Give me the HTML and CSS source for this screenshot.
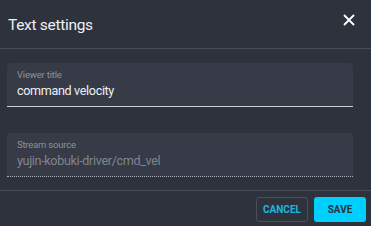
FILE: index.html
```html
<!DOCTYPE html>
<html lang="en">
<head>
    <meta charset="UTF-8">
    <title>Text settings</title>
    <link rel="stylesheet" href="styles.css">
</head>
<body>
    <div class="dialog">
        <div class="dialog-header">
            <div class="dialog-title">Text settings</div>
            <button class="close-btn" aria-label="Close">
                <svg width="12" height="12" viewBox="0 0 12 12">
                    <path d="M1 1L11 11M11 1L1 11" stroke="#ffffff" stroke-width="1.8" fill="none"/>
                </svg>
            </button>
        </div>
        <div class="dialog-body">
            <div class="field">
                <div class="field-label">Viewer title</div>
                <div class="field-value">command velocity</div>
            </div>
            <div class="field disabled">
                <div class="field-label">Stream source</div>
                <div class="field-value">yujin-kobuki-driver/cmd_vel</div>
            </div>
        </div>
        <div class="dialog-footer">
            <button class="btn btn-outline">CANCEL</button>
            <button class="btn btn-primary">SAVE</button>
        </div>
    </div>
</body>
</html>
```

FILE: styles.css
```css
:root {
    --bg: #2d323d;
    --field-bg: #363b47;
    --divider: #474c57;
    --accent: #00d0ff;
}

body {
    margin: 0;
    background-color: var(--bg);
    font-family: Roboto, 'Noto Sans', sans-serif;
    color: #ffffff;
}

.dialog {
    width: 371px;
    height: 226px;
    display: flex;
    flex-direction: column;
}

.dialog-header {
    height: 48px;
    display: flex;
    align-items: center;
    justify-content: space-between;
    padding: 0 16px 0 8px;
    border-bottom: 1px solid var(--divider);
}

.dialog-title {
    font-size: 15.5px;
    letter-spacing: -0.3px;
    color: #eef0f3;
    margin-top: 2px;
}

.close-btn {
    background: none;
    border: none;
    padding: 0;
    cursor: pointer;
    display: flex;
    margin-top: -9px;
}

.dialog-body {
    padding: 14px 18px 0 7px;
    height: 127px;
}

.field {
    background-color: var(--field-bg);
    border-radius: 4px 4px 0 0;
    border-bottom: 1px solid #c9ccd2;
    padding: 6px 10px 5px;
    height: 32px;
}

.field.disabled {
    margin-top: 26px;
    border-bottom: 1px dotted #a9adb5;
}

.field-label {
    font-size: 9.5px;
    letter-spacing: -0.2px;
    color: #8c919b;
    line-height: 12px;
}

.field-value {
    font-size: 12.6px;
    letter-spacing: -0.35px;
    line-height: 20px;
    color: #eef0f3;
}

.field.disabled .field-value {
    color: #80858f;
}

.dialog-footer {
    border-top: 1px solid var(--divider);
    display: flex;
    justify-content: flex-end;
    gap: 6px;
    padding: 6px 5px 0 0;
}

.btn {
    font-family: Roboto, sans-serif;
    font-size: 10px;
    font-weight: bold;
    height: 25px;
    border-radius: 3px;
    cursor: pointer;
    padding: 0;
}

.btn-outline {
    width: 52px;
    background: none;
    border: 1px solid #4a505b;
    color: #1ab8e0;
}

.btn-primary {
    width: 52px;
    background-color: var(--accent);
    border: none;
    color: #2d323d;
}
```
